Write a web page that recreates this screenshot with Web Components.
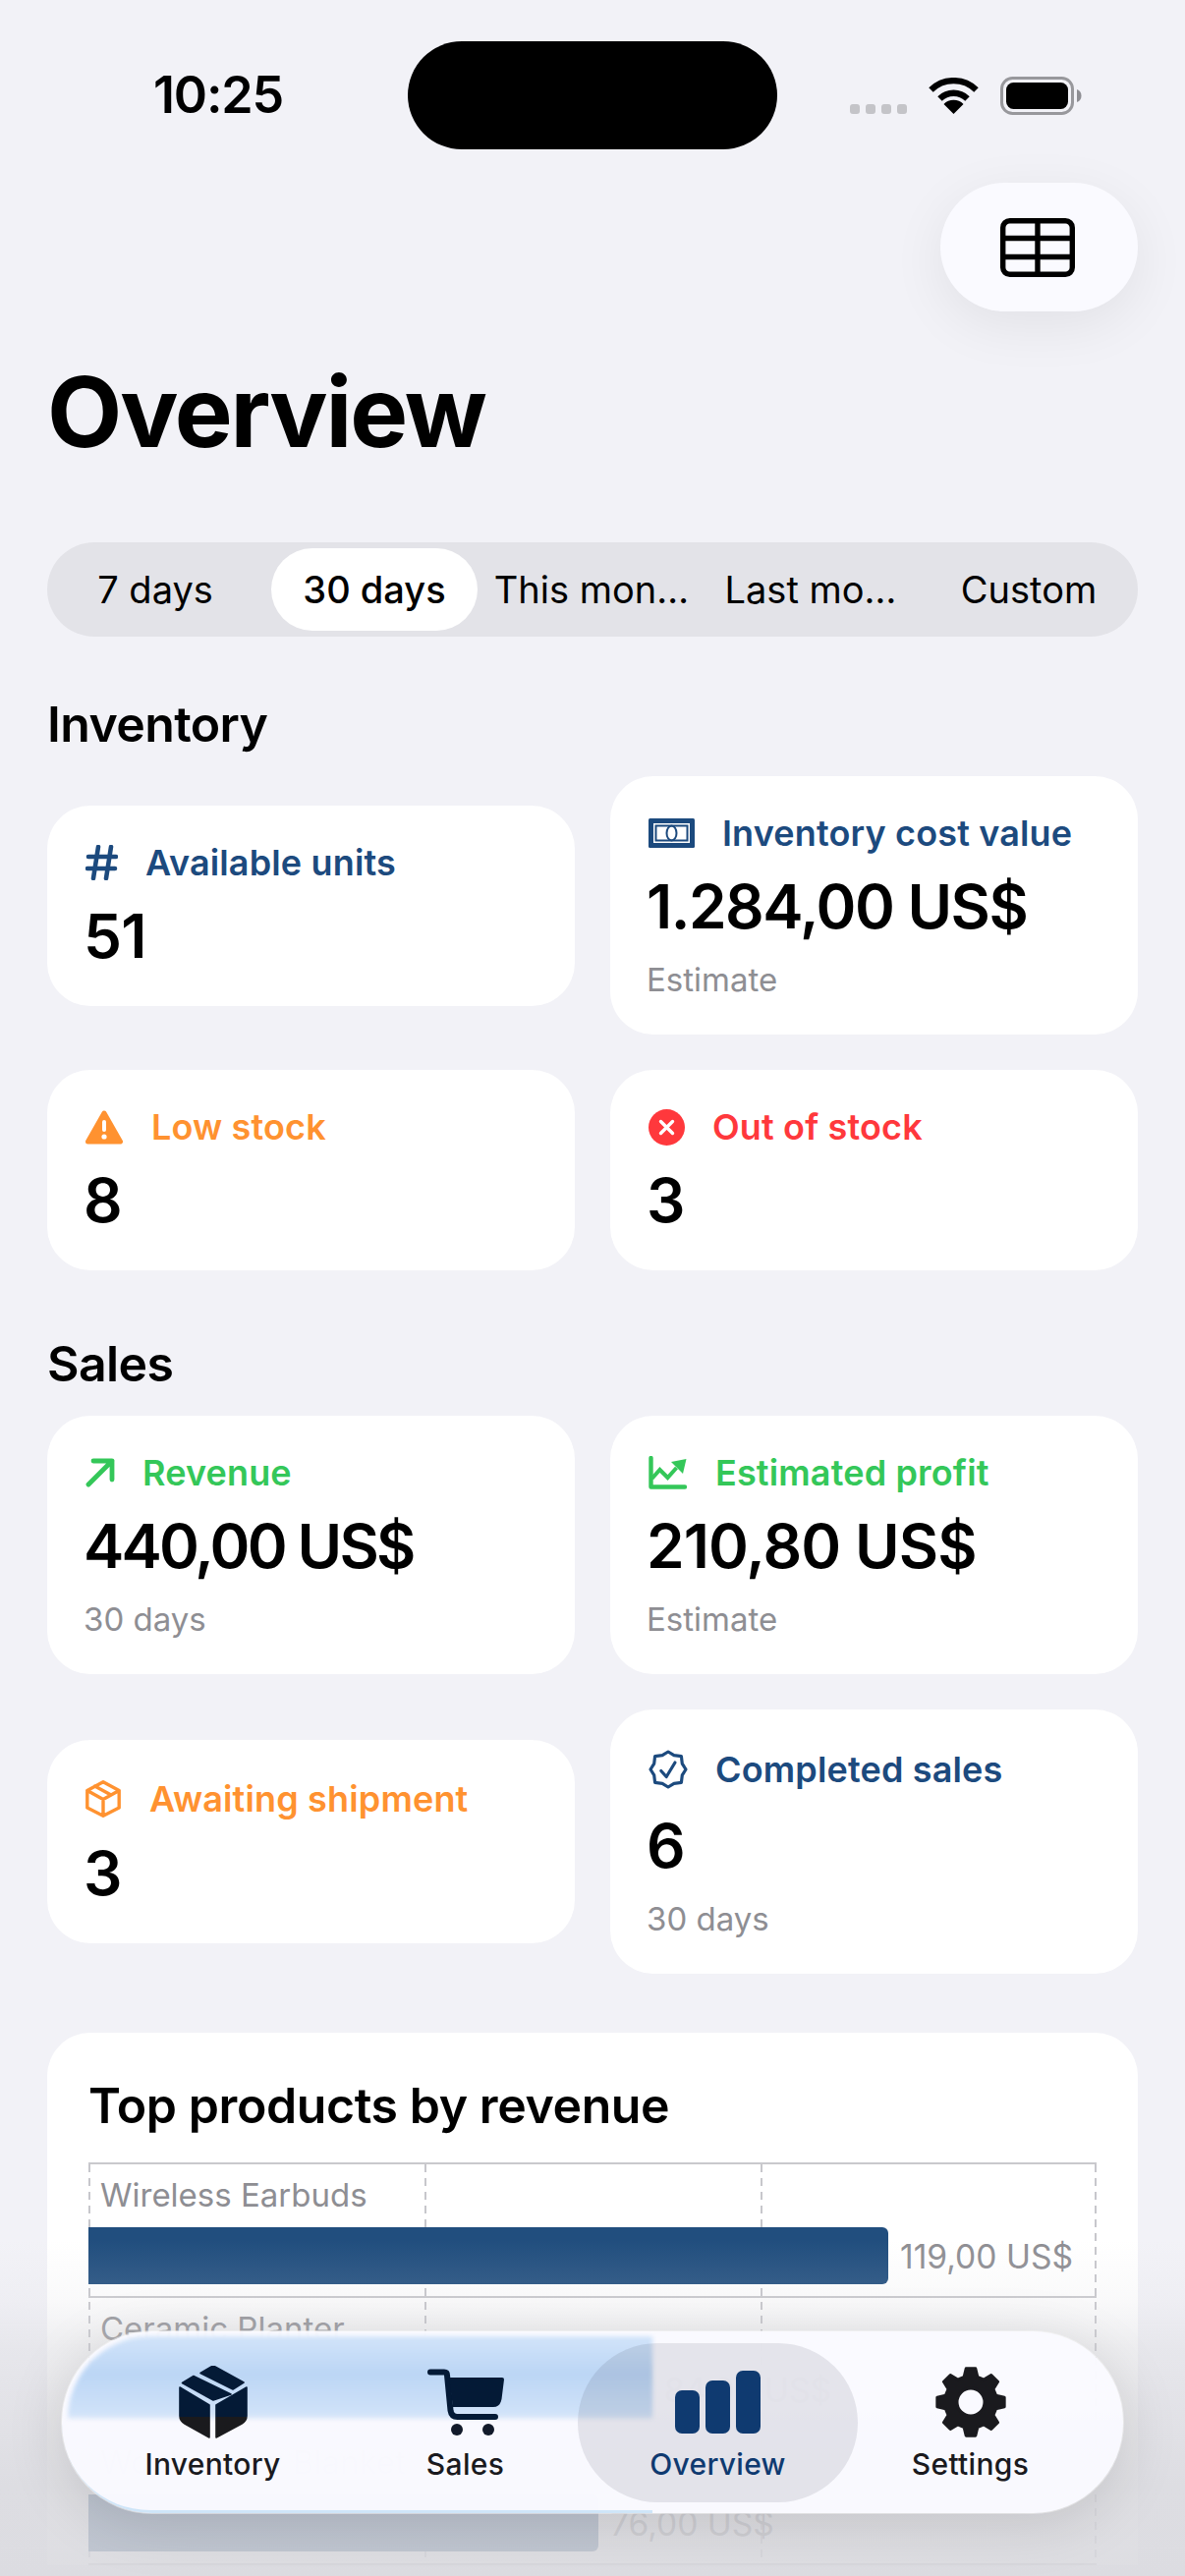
<!DOCTYPE html>
<html lang="en">
<head>
<meta charset="utf-8">
<title>Overview</title>
<style>
  html, body { margin: 0; padding: 0; background: #f2f2f7; }
  body { font-family: Inter, "Liberation Sans", sans-serif; }
</style>
</head>
<body>
<app-screen>
  <status-bar></status-bar>

  <page-header>Overview</page-header>

  <segment-control>
    <seg-item style="--w:208px;--mr:14px">7 days</seg-item>
    <seg-item style="--w:210px;--mr:6px" selected>30 days</seg-item>
    <seg-item style="--w:220px;--mr:3px">This mon…</seg-item>
    <seg-item style="--w:220px;--mr:7px">Last mo…</seg-item>
    <seg-item style="--w:210px">Custom</seg-item>
  </segment-control>

  <section-title style="--top:59px">Inventory</section-title>
  <stat-grid>
    <stat-card label="Available units" value="51" tone="navy">
      <svg slot="icon" width="33" height="36" viewBox="0 0 33 36" fill="none" stroke="currentColor" stroke-width="4.6" stroke-linecap="round"><path d="M13 2 8 34M26 2l-5 32M3 12h28M2 24h28"/></svg>
    </stat-card>
    <stat-card label="Inventory cost value" value="1.284,00 US$" sub="Estimate" tone="navy" style="--val-ls:-1.5px">
      <svg slot="icon" width="47" height="30" viewBox="0 0 47 30"><rect width="47" height="30" rx="1.5" fill="currentColor"/><rect x="5" y="5" width="37" height="20" fill="#fff"/><rect x="7.5" y="7.5" width="32" height="15" fill="none" stroke="currentColor" stroke-width="2"/><ellipse cx="23.5" cy="15" rx="5" ry="7.5" fill="none" stroke="currentColor" stroke-width="2"/></svg>
    </stat-card>
    <stat-card label="Low stock" value="8" tone="orange" style="--gap:29px">
      <svg slot="icon" width="38" height="35" viewBox="0 0 38 35"><path d="M19 3 35.5 32h-33z" fill="currentColor" stroke="currentColor" stroke-width="5" stroke-linejoin="round"/><rect x="17" y="10" width="4" height="12" rx="2" fill="#fff"/><circle cx="19" cy="27" r="2.6" fill="#fff"/></svg>
    </stat-card>
    <stat-card label="Out of stock" value="3" tone="red">
      <svg slot="icon" width="37" height="37" viewBox="0 0 37 37"><circle cx="18.5" cy="18.5" r="18.5" fill="currentColor"/><path d="m12.5 12.5 12 12m0-12-12 12" stroke="#fff" stroke-width="3.4" stroke-linecap="round"/></svg>
    </stat-card>
  </stat-grid>

  <section-title style="--top:65px">Sales</section-title>
  <stat-grid>
    <stat-card label="Revenue" value="440,00 US$" sub="30 days" tone="green" style="--val-ls:-2.8px">
      <svg slot="icon" width="30" height="30" viewBox="0 0 30 30" fill="none" stroke="currentColor" stroke-width="4.8" stroke-linecap="round" stroke-linejoin="round"><path d="M3 27 27 3M8 3h19v19"/></svg>
    </stat-card>
    <stat-card label="Estimated profit" value="210,80 US$" sub="Estimate" tone="green" style="--val-ls:-.9px">
      <svg slot="icon" width="40" height="34" viewBox="0 0 40 34"><path d="M2.5 2v29.5H37" fill="none" stroke="currentColor" stroke-width="4.4" stroke-linecap="round" stroke-linejoin="round"/><path d="m3.5 23 8-9 8 8 9-10" fill="none" stroke="currentColor" stroke-width="4"/><path d="M23 6 38.5 3 35 18z" fill="currentColor"/></svg>
    </stat-card>
    <stat-card label="Awaiting shipment" value="3" tone="orange" style="--label-h:47px;--gap:29px">
      <svg slot="icon" width="36" height="38" viewBox="0 0 36 38" fill="none" stroke="currentColor" stroke-width="3.4" stroke-linejoin="round" stroke-linecap="round"><path d="M18 1.8 34.2 10.5v17.5L18 36.2 1.8 28V10.5zM1.8 10.5 18 19.5l16.2-9M18 19.5v16.7M9.5 6l16.5 9"/></svg>
    </stat-card>
    <stat-card label="Completed sales" value="6" sub="30 days" tone="navy" style="--label-h:50px">
      <svg slot="icon" width="40" height="40" viewBox="0 0 40 40" fill="none" stroke="currentColor" stroke-width="3.2" stroke-linejoin="round" stroke-linecap="round"><path d="M20 2l5.900 3.700 7.500.9.9 7.500L38 20l-3.700 5.900-.9 7.500-7.500.9L20 38l-5.900-3.700-7.500-.9-.9-7.500L2 20l3.700-5.900.9-7.500 7.500-.9z"/><path d="m12.800 21.500 5.400 6L27 13"/></svg>
    </stat-card>
  </stat-grid>

  <chart-card heading="Top products by revenue">
    <bar-row label="Wireless Earbuds" amount="119,00 US$" width="814"></bar-row>
    <bar-row label="Ceramic Planter" amount="84,00 US$" width="574"></bar-row>
    <bar-row label="Wool Throw Blanket" amount="76,00 US$" width="519"></bar-row>
  </chart-card>

  <tab-bar slot="overlay">
    <tab-item label="Inventory">
      <svg width="70" height="74" viewBox="0 0 70 74" fill="url(#ink1)" stroke="url(#ink1)" stroke-width="1.6" stroke-linejoin="round">
        <defs><linearGradient id="ink1" gradientUnits="userSpaceOnUse" x1="0" y1="0" x2="0" y2="74"><stop offset=".7" stop-color="#041a36"/><stop offset=".7" stop-color="#1a1a1d"/></linearGradient></defs>
        <path d="M22 7.500 33 1q2-1 4 0l29 16-11 7zM3.500 17.500 15 10.500 53 29l-18 6zM1 22 31 40v33L6 59q-5-3-5-8zM69 22 38 40v33l26-14q5-3 5-8z"/>
      </svg>
    </tab-item>
    <tab-item label="Sales">
      <svg width="78" height="68" viewBox="0 0 78 68">
        <path d="M3 3.500h14q3 0 3 3l3.500 36q1 6.500 7 6.500H69" fill="none" stroke="#041a36" stroke-width="6" stroke-linecap="round" stroke-linejoin="round"/>
        <path d="M22 9h54q2 0 2 2l-2.500 20q-1.500 8-8.500 8H26z" fill="#041a36"/>
        <circle cx="30" cy="62" r="6" fill="#121a2a"/><circle cx="62" cy="62" r="6" fill="#121a2a"/>
      </svg>
    </tab-item>
    <tab-item label="Overview" active>
      <svg width="87" height="64" viewBox="0 0 87 64" fill="#0f3a70"><rect y="20" width="25" height="44" rx="7"/><rect x="31" y="10" width="25" height="54" rx="7"/><rect x="62" width="25" height="64" rx="7"/></svg>
    </tab-item>
    <tab-item label="Settings">
      <gear-icon></gear-icon>
    </tab-item>
  </tab-bar>
</app-screen>

<script>
  // small helper: every element gets its shadow root from a string
  function shadow(el, html) {
    el.attachShadow({ mode: 'open' }).innerHTML = html;
  }

  class AppScreen extends HTMLElement {
    connectedCallback() {
      shadow(this, `
        <style>
          :host { display: block; position: relative; width: 1206px; height: 2622px; overflow: hidden;
                  background: #f2f2f7; color: #000; font-family: Inter, "Liberation Sans", sans-serif; }
          .content { padding: 0 48px; }
          /* grey veil the system paints under the floating tab bar */
          .veil { position: absolute; left: 0; right: 0; top: 2280px; bottom: 0; pointer-events: none;
                  background: linear-gradient(to bottom,
                    rgba(217,217,222,0) 0,
                    rgba(217,217,222,.14) 60px,
                    rgba(217,217,222,.45) 110px,
                    rgba(217,217,222,.84) 250px,
                    rgba(217,217,222,.88) 100%); }
        </style>
        <div class="content"><slot></slot></div>
        <div class="veil"></div>
        <slot name="overlay"></slot>`);
    }
  }

  class StatusBar extends HTMLElement {
    connectedCallback() {
      shadow(this, `
        <style>
          :host { display: block; height: 186px; margin: 0 -48px; position: relative; }
          .bar { display: flex; align-items: flex-start; height: 100%; }
          .time { margin: 66px 0 0 156px; width: 259px; font-size: 52px; line-height: 62px; font-weight: 600; letter-spacing: -1.2px; }
          .island { margin-top: 42px; width: 376px; height: 110px; border-radius: 55px; background: #000; }
          .signal { display: flex; gap: 6px; margin: 106px 0 0 74px; }
          .signal i { width: 10px; height: 10px; border-radius: 3px; background: #c4c4c8; }
          .wifi { margin: 79px 0 0 22px; }
          .battery { margin: 78px 0 0 22px; }
        </style>
        <div class="bar">
          <div class="time">10:25</div>
          <div class="island"></div>
          <div class="signal"><i></i><i></i><i></i><i></i></div>
          <svg class="wifi" width="51" height="37" viewBox="0 0 51 37" fill="none" stroke="#000" stroke-width="6.4">
            <path d="M2.500 12.500a33 33 0 0 1 46 0M11.500 21.500a20 20 0 0 1 28 0"/>
            <path d="M25.500 37 15.500 27a14 14 0 0 1 20 0z" fill="#000" stroke="none"/>
          </svg>
          <svg class="battery" width="83" height="39" viewBox="0 0 83 39">
            <rect x="1.500" y="1.500" width="72" height="36" rx="11" fill="none" stroke="#98989c" stroke-width="3"/>
            <rect x="6" y="6" width="63" height="27" rx="7.500" fill="#000"/>
            <path d="M78 13c3 1 4.500 3.500 4.500 6.500S81 25 78 26z" fill="#8e8e93"/>
          </svg>
        </div>`);
    }
  }

  class PageHeader extends HTMLElement {
    connectedCallback() {
      shadow(this, `
        <style>
          :host { display: block; margin-bottom: 72px; }
          .actions { display: flex; justify-content: flex-end; }
          button { width: 201px; height: 131px; border: 0; border-radius: 66px; background: #fafaff; padding: 0 3px 0 0;
                   display: flex; align-items: center; justify-content: center;
                   box-shadow: 0 14px 56px rgba(0,0,0,.07); }
          h1 { margin: 41px 0 0 0; font-size: 99px; line-height: 122px; font-weight: 700; letter-spacing: -2.1px; }
        </style>
        <div class="actions">
          <button aria-label="Table">
            <svg width="76" height="60" viewBox="0 0 76 60" fill="none" stroke="#000" stroke-width="5.400">
              <rect x="2.700" y="2.700" width="70.600" height="54.600" rx="7"/>
              <path d="M38 3v54M3 20.500h70M3 39.500h70"/>
            </svg>
          </button>
        </div>
        <h1><slot></slot></h1>`);
    }
  }

  class SegmentControl extends HTMLElement {
    connectedCallback() {
      shadow(this, `
        <style>
          :host { display: flex; height: 96px; box-sizing: border-box; padding: 6px; border-radius: 48px; background: #e3e3e8; }
        </style>
        <slot></slot>`);
    }
  }

  class SegItem extends HTMLElement {
    connectedCallback() {
      const on = this.hasAttribute('selected');
      shadow(this, `
        <style>
          :host { display: block; flex: 0 0 var(--w); margin-right: var(--mr, 0); }
          div { height: 84px; border-radius: 42px; display: flex; align-items: center; justify-content: center;
                font-size: 38px; font-weight: ${on ? 500 : 400}; letter-spacing: 0; white-space: nowrap;
                background: ${on ? '#fff' : 'transparent'}; }
        </style>
        <div><slot></slot></div>`);
    }
  }

  class SectionTitle extends HTMLElement {
    connectedCallback() {
      shadow(this, `
        <style>
          :host { display: block; margin-top: var(--top); margin-bottom: 23px; height: 60px; line-height: 60px;
                  font-size: 50px; font-weight: 600; letter-spacing: -.6px; }
        </style>
        <slot></slot>`);
    }
  }

  class StatGrid extends HTMLElement {
    connectedCallback() {
      shadow(this, `
        <style>
          :host { display: grid; grid-template-columns: 537px 537px; gap: 36px; align-items: center; }
        </style>
        <slot></slot>`);
    }
  }

  const TONES = { navy: '#1c4a7e', orange: '#ff9230', red: '#ff383c', green: '#34c759' };

  class StatCard extends HTMLElement {
    connectedCallback() {
      const sub = this.getAttribute('sub');
      const tone = TONES[this.getAttribute('tone')] || TONES.navy;
      shadow(this, `
        <style>
          :host { display: block; }
          .card { background: #fff; border-radius: 44px; padding: 36px 38px; display: flex; flex-direction: column; gap: 18px; }
          .label { display: flex; align-items: center; gap: var(--gap, 28px); min-height: var(--label-h, 44px); color: ${tone};
                   font-size: 36px; font-weight: 600; letter-spacing: .15px; white-space: nowrap; }
          ::slotted(svg) { flex: none; margin-left: 1px; }
          .value { height: 70px; line-height: 70px; margin-left: -1px; font-size: 62px; font-weight: 600; letter-spacing: var(--val-ls, -.8px); white-space: nowrap; }
          .sub { height: 40px; line-height: 40px; margin-top: 1px; margin-left: -1px; font-size: 33px; color: #8e8e93; }
        </style>
        <div class="card">
          <div class="label"><slot name="icon"></slot><span>${this.getAttribute('label')}</span></div>
          <div class="value">${this.getAttribute('value')}</div>
          ${sub ? `<div class="sub">${sub}</div>` : ''}
        </div>`);
    }
  }

  class ChartCard extends HTMLElement {
    connectedCallback() {
      shadow(this, `
        <style>
          :host { display: block; margin-top: 60px; background: #fff; border-radius: 44px 44px 0 0; padding: 46px 42px 0; }
          h2 { margin: 0 0 30px 0; height: 56px; line-height: 56px; font-size: 50px; font-weight: 600; letter-spacing: -.4px; white-space: nowrap; }
          .plot { position: relative; border-top: 2px solid #c9c9cd; }
          .grid { position: absolute; inset: 0; display: grid; grid-template-columns: repeat(3, 1fr); }
          .grid i { background: repeating-linear-gradient(to bottom, #c7c7cc 0 8px, transparent 8px 14px) left top / 2px 100% no-repeat; }
          .grid i:last-child { background:
            repeating-linear-gradient(to bottom, #c7c7cc 0 8px, transparent 8px 14px) left top / 2px 100% no-repeat,
            repeating-linear-gradient(to bottom, #c7c7cc 0 8px, transparent 8px 14px) right top / 2px 100% no-repeat; }
          .rows { position: relative; }
        </style>
        <h2>${this.getAttribute('heading')}</h2>
        <div class="plot">
          <div class="grid"><i></i><i></i><i></i></div>
          <div class="rows"><slot></slot></div>
        </div>`);
    }
  }

  class BarRow extends HTMLElement {
    connectedCallback() {
      shadow(this, `
        <style>
          :host { display: block; height: 134px; border-bottom: 2px solid #c9c9cd; }
          .label { height: 62px; margin-bottom: 2px; line-height: 62px; padding-left: 12px; font-size: 33px; color: #8e8e93; white-space: nowrap; }
          .line { display: flex; align-items: center; gap: 12px; }
          .bar { height: 58px; width: ${this.getAttribute('width')}px; border-radius: 0 6px 6px 0; background: #214e7e; }
          .amount { font-size: 33.6px; color: #8e8e93; white-space: nowrap; }
        </style>
        <div class="label">${this.getAttribute('label')}</div>
        <div class="line"><div class="bar"></div><div class="amount">${this.getAttribute('amount')}</div></div>`);
    }
  }

  class TabBar extends HTMLElement {
    connectedCallback() {
      shadow(this, `
        <style>
          :host { position: absolute; left: 63px; width: 1080px; bottom: 64px; height: 185px; border-radius: 92px;
                  background: rgba(250,250,255,.965); box-shadow: 0 10px 60px rgba(0,0,0,.13), 0 0 0 1px rgba(255,255,255,.6); }
          .glass { position: absolute; inset: 0; border-radius: 92px; overflow: hidden; }
          .rim { position: absolute; left: 0; bottom: 0; width: 601px; height: 90px; border-bottom: 3px solid #cfe5f8; border-radius: 0 0 0 92px; box-sizing: border-box; }
          .band { position: absolute; left: 6px; top: 5px; width: 595px; height: 84px; border-radius: 84px 0 0 0; filter: blur(2px);
                  background: linear-gradient(to bottom, #d2e4fa 0, #bcd6f5 45%, #cfe2f9 92%, #dfeafa 100%); }
          .items { position: relative; display: grid; grid-template-columns: repeat(4, 257px); padding-left: 25px; height: 100%; }
        </style>
        <div class="glass">
          <div class="band"></div>
          <div class="rim"></div>
        </div>
        <div class="items"><slot></slot></div>`);
    }
  }

  class TabItem extends HTMLElement {
    connectedCallback() {
      const on = this.hasAttribute('active');
      shadow(this, `
        <style>
          :host { display: block; position: relative; }
          .pill { position: absolute; left: -14px; right: -14px; top: 12px; bottom: 11px; border-radius: 81px;
                  background: rgba(18,18,40,.095); }
          .tab { position: relative; display: flex; flex-direction: column; align-items: center; padding-top: 35px; }
          .icon { height: 74px; display: flex; align-items: center; justify-content: center; }
          .name { margin-top: 8px; height: 36px; line-height: 36px; font-size: 30px; font-weight: 500; letter-spacing: .3px;
                  color: ${on ? '#0f3a70' : '#1a1a1e'}; white-space: nowrap; }
        </style>
        ${on ? '<div class="pill"></div>' : ''}
        <div class="tab">
          <div class="icon"><slot></slot></div>
          <div class="name">${this.getAttribute('label')}</div>
        </div>`);
    }
  }

  class GearIcon extends HTMLElement {
    connectedCallback() {
      // 8 teeth, first one pointing straight up
      let d = '';
      for (let i = 0; i < 8; i++) {
        const a = i * 45;
        [[26.5, -15], [34.5, -8], [34.5, 8], [26.5, 15]].forEach(([r, off], j) => {
          const t = (a + off - 90) * Math.PI / 180;
          d += (i === 0 && j === 0 ? 'M' : 'L') + (36 + r * Math.cos(t)).toFixed(2) + ' ' + (36 + r * Math.sin(t)).toFixed(2);
        });
      }
      d += 'ZM50 36a14 14 0 1 0-28 0a14 14 0 1 0 28 0Z';
      shadow(this, `
        <style>:host { display: block; width: 72px; height: 72px; } svg { display: block; }</style>
        <svg width="72" height="72" viewBox="0 0 72 72"><path d="${d}" fill="#1a1a1e" fill-rule="evenodd" stroke="#1a1a1e" stroke-width="3" stroke-linejoin="round"/></svg>`);
    }
  }

  customElements.define('app-screen', AppScreen);
  customElements.define('status-bar', StatusBar);
  customElements.define('page-header', PageHeader);
  customElements.define('segment-control', SegmentControl);
  customElements.define('seg-item', SegItem);
  customElements.define('section-title', SectionTitle);
  customElements.define('stat-grid', StatGrid);
  customElements.define('stat-card', StatCard);
  customElements.define('chart-card', ChartCard);
  customElements.define('bar-row', BarRow);
  customElements.define('tab-bar', TabBar);
  customElements.define('tab-item', TabItem);
  customElements.define('gear-icon', GearIcon);
</script>
</body>
</html>
